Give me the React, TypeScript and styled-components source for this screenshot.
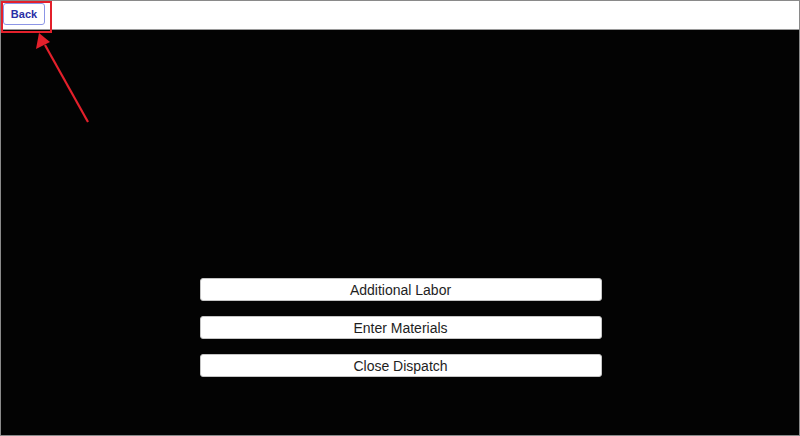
import { createGlobalStyle, styled } from "styled-components";

const GlobalStyle = createGlobalStyle`
  html, body {
    margin: 0;
    padding: 0;
    background: #030303;
  }
  body {
    font-family: "Liberation Sans", Arial, sans-serif;
  }
`;

const Screen = styled.div`
  position: relative;
  box-sizing: border-box;
  width: 800px;
  height: 436px;
  border: 1px solid #8a8a8a;
  background: #030303;
  display: flex;
  flex-direction: column;
  overflow: hidden;
`;

const Header = styled.header`
  box-sizing: border-box;
  height: 29px;
  background: #fff;
  border-bottom: 1px solid #9a9a9a;
  display: flex;
  align-items: flex-start;
  padding: 2px 0 0 2px;
`;

const BackButton = styled.button`
  box-sizing: border-box;
  width: 42px;
  height: 22px;
  padding: 0;
  background: #fff;
  border: 1px solid #8c95e6;
  border-radius: 3px;
  color: #2a2fa6;
  font-family: "Liberation Sans", Arial, sans-serif;
  font-size: 11px;
  font-weight: bold;
  cursor: pointer;
`;

const Body = styled.main`
  flex: 1;
  display: flex;
  flex-direction: column;
  align-items: center;
  padding-top: 248px;
  gap: 15px;
`;

const ActionButton = styled.button`
  box-sizing: border-box;
  width: 402px;
  height: 23px;
  margin-left: 1px;
  background: #fff;
  border: 1px solid #c4c4c4;
  border-radius: 3px;
  color: #1e1e1e;
  font-family: "Liberation Sans", Arial, sans-serif;
  font-size: 14px;
  cursor: pointer;
`;

// red callout around the back button
const Highlight = styled.div`
  position: absolute;
  left: 0;
  top: 0;
  width: 51px;
  height: 32px;
  box-sizing: border-box;
  border: 2px solid #e3202b;
  pointer-events: none;
`;

const Arrow = styled.svg`
  position: absolute;
  left: 0;
  top: 0;
  pointer-events: none;
`;

const actions = ["Additional Labor", "Enter Materials", "Close Dispatch"];

export default function App() {
  return (
    <>
      <GlobalStyle />
      <Screen>
        <Header>
          <BackButton>Back</BackButton>
        </Header>
        <Body>
          {actions.map((label) => (
            <ActionButton key={label}>{label}</ActionButton>
          ))}
        </Body>
        <Highlight />
        <Arrow width="120" height="130" viewBox="0 0 120 130">
          <line x1="87" y1="121" x2="44" y2="44" stroke="#e3202b" strokeWidth="2.2" />
          <polygon points="38,32 35,48 49,41" fill="#e3202b" />
        </Arrow>
      </Screen>
    </>
  );
}
